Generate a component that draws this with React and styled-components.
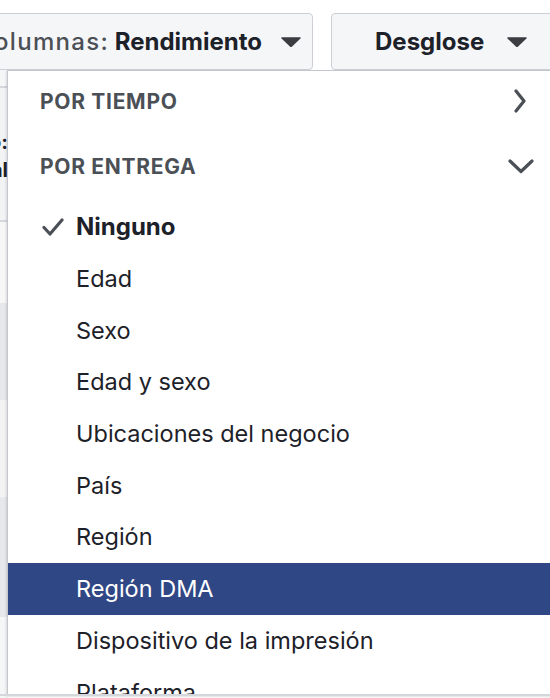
import React from "react"
import styled, { createGlobalStyle } from "styled-components"

const GlobalStyle = createGlobalStyle`
  html, body {
    margin: 0;
    padding: 0;
    background: #ffffff;
    overflow: hidden;
  }
  body {
    font-family: Inter, "Liberation Sans", Arial, sans-serif;
    color: #1d2129;
  }
`

const Page = styled.div`
  position: relative;
  width: 550px;
  height: 698px;
  overflow: hidden;
`

const Toolbar = styled.div`
  display: flex;
  gap: 18px;
  padding-top: 13px;
  margin-left: -37px;
`

const ToolButton = styled.button`
  display: flex;
  align-items: center;
  justify-content: ${({ $end }) => ($end ? "flex-end" : "flex-start")};
  gap: ${({ $gap }) => $gap}px;
  height: 57px;
  padding: 0 11px 0 ${({ $pl }) => $pl}px;
  background: #f5f6f7;
  border: 1px solid #ccd0d5;
  border-radius: 4px;
  font-family: inherit;
  font-size: 24px;
  font-weight: 700;
  color: #1d2129;
  white-space: nowrap;
  flex-shrink: 0;
  width: ${({ $w }) => $w}px;
  box-sizing: border-box;
`

const Label = styled.span`
  color: #4b4f56;
  font-weight: 500;
  letter-spacing: 1.3px;
`

const Caret = () => (
  <svg width="20" height="10" viewBox="0 0 20 10">
    <path d="M1 1h18l-9 8.5z" fill="#3a3d42" stroke="#3a3d42" strokeWidth="1.5" strokeLinejoin="round" />
  </svg>
)

const Backdrop = styled.div`
  display: flex;
  flex-direction: column;
`

const BackRow = styled.div`
  display: flex;
  justify-content: flex-end;
  align-items: center;
  width: 8px;
  height: ${({ $h }) => $h}px;
  background: ${({ $bg }) => $bg};
  border-bottom: ${({ $line }) => ($line ? "2px solid #d3d6db" : "none")};
  box-sizing: border-box;
`

const BackCell = styled.div`
  display: flex;
  flex-direction: column;
  align-items: flex-end;
  gap: 6px;
  padding-top: 4px;
  font-size: 20px;
  font-weight: 700;
  color: #1d2129;
  white-space: nowrap;
  line-height: 22px;
`

const Menu = styled.div`
  position: absolute;
  top: 70px;
  left: 7px;
  width: 545px;
  height: 624px;
  background: #ffffff;
  border: 1px solid #c4c8ce;
  border-right: none;
  box-shadow: -1px 1px 2px rgba(0, 0, 0, 0.12);
  overflow: hidden;
`

const Header = styled.div`
  display: flex;
  align-items: center;
  justify-content: space-between;
  height: 65px;
  padding: 0 18px 5px 32px;
  box-sizing: border-box;
  font-size: 21px;
  font-weight: 700;
  letter-spacing: 0.7px;
  color: #4b4f56;
`

const Item = styled.div`
  display: flex;
  align-items: center;
  height: 51.7px;
  padding-left: 68px;
  font-size: ${({ $bold }) => ($bold ? 24 : 23.5)}px;
  font-weight: ${({ $bold }) => ($bold ? 700 : 400)};
  color: ${({ $active }) => ($active ? "#ffffff" : "#1d2129")};
  background: ${({ $active }) => ($active ? "#2f4785" : "transparent")};
  white-space: nowrap;
`

const Check = styled.span`
  display: inline-flex;
  width: 34px;
  margin-left: -34px;
  justify-content: flex-start;
`

const Bottom = styled.div`
  position: absolute;
  left: 0;
  right: 0;
  top: 694px;
  height: 4px;
  border-top: 2px solid #d3d6db;
`

const ChevronRight = () => (
  <svg width="28" height="24" viewBox="0 0 28 24">
    <path d="M9 2l8 10-8 10" fill="none" stroke="#4b4f56" strokeWidth="3.2" strokeLinecap="round" strokeLinejoin="round" />
  </svg>
)

const ChevronDown = () => (
  <svg width="28" height="18" viewBox="0 0 28 18">
    <path d="M3 4l11 10.5 11-10.5" fill="none" stroke="#4b4f56" strokeWidth="3.2" strokeLinecap="round" strokeLinejoin="round" />
  </svg>
)

const CheckIcon = () => (
  <svg width="22" height="20" viewBox="0 0 22 20">
    <path d="M2 10.5l6 6.5L20 3" fill="none" stroke="#4b4f56" strokeWidth="3.2" strokeLinecap="round" strokeLinejoin="round" />
  </svg>
)

const options = [
  "Edad",
  "Sexo",
  "Edad y sexo",
  "Ubicaciones del negocio",
  "País",
  "Región",
  "Región DMA",
  "Dispositivo de la impresión",
  "Plataforma",
]

export default function App() {
  return (
    <>
      <GlobalStyle />
      <Page>
        <Toolbar>
          <ToolButton $w={350} $pl={10} $gap={19} $end>
            <span>
              <Label>Columnas:</Label> Rendimiento
            </span>
            <Caret />
          </ToolButton>
          <ToolButton $w={240} $pl={43} $gap={23}>
            <span>Desglose</span>
            <Caret />
          </ToolButton>
        </Toolbar>
        <Backdrop>
          <BackRow $h={18} $bg="#f5f6f7" $line />
          <BackRow $h={134} $bg="#f2f3f5" $line>
            <BackCell>
              <span>Resultado:</span>
              <span>Total</span>
            </BackCell>
          </BackRow>
          <BackRow $h={81} $bg="#f7f7f8" />
          <BackRow $h={97} $bg="#e6e8eb" />
          <BackRow $h={97} $bg="#f3f3f4" />
          <BackRow $h={120} $bg="#e6e8eb" />
          <BackRow $h={100} $bg="#f5f6f7" />
        </Backdrop>
        <Menu>
          <Header>
            <span>POR TIEMPO</span>
            <ChevronRight />
          </Header>
          <Header>
            <span>POR ENTREGA</span>
            <ChevronDown />
          </Header>
          <Item $bold>
            <Check>
              <CheckIcon />
            </Check>
            Ninguno
          </Item>
          {options.map((o) => (
            <Item key={o} $active={o === "Región DMA"}>
              {o}
            </Item>
          ))}
        </Menu>
        <Bottom />
      </Page>
    </>
  )
}
